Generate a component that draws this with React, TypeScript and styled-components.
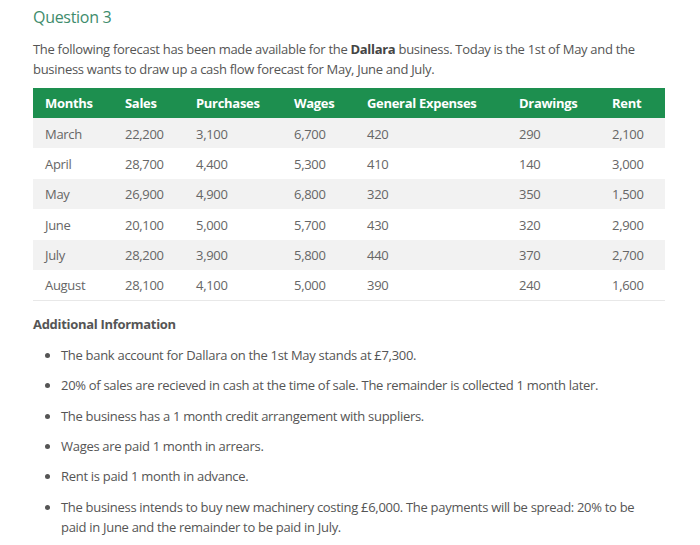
import React from "react";
import styled, { createGlobalStyle } from "styled-components";

const Global = createGlobalStyle`
  html, body { margin: 0; padding: 0; background: #ffffff; }
  body { font-family: "Open Sans", "Liberation Sans", sans-serif; color: #555555; }
`;

const Page = styled.div`
  width: 700px;
  height: 545px;
  box-sizing: border-box;
  padding: 5px 35px 0 33px;
  overflow: hidden;
`;

const Title = styled.h2`
  margin: 0;
  font-weight: 400;
  font-size: 16px;
  line-height: 24px;
  color: #3e8c6c;
  letter-spacing: -0.3px;
`;

const Intro = styled.p`
  margin: 10px 0 0 0;
  font-size: 13px;
  line-height: 20px;
  color: #555555;
  letter-spacing: -0.3px;
  b { font-weight: 700; color: #444; }
`;

const Table = styled.table`
  margin-top: 9px;
  width: 632px;
  border-collapse: collapse;
  table-layout: fixed;
  font-size: 13px;
  letter-spacing: -0.3px;
  border-bottom: 1px solid #e8e8e8;
`;

const HeadCell = styled.th<{ $w: number }>`
  width: ${(p) => p.$w}px;
  background: #1d8f4f;
  color: #ffffff;
  font-weight: 700;
  text-align: left;
  padding: 0 0 0 12px;
  height: 30px;
  box-sizing: border-box;
`;

const Row = styled.tr<{ $shade: boolean }>`
  background: ${(p) => (p.$shade ? "#f2f2f2" : "#ffffff")};
`;

const Cell = styled.td`
  padding: 1px 0 0 12px;
  height: 30.4px;
  box-sizing: border-box;
  color: #666666;
  white-space: nowrap;
`;

const SubHeading = styled.h3`
  margin: 13px 0 0 0;
  font-size: 13px;
  line-height: 20px;
  font-weight: 700;
  color: #555555;
  letter-spacing: -0.3px;
`;

const List = styled.ul`
  margin: 11px 0 0 0;
  padding: 0 20px 0 28px;
  font-size: 13px;
  line-height: 20px;
  color: #555555;
  letter-spacing: -0.3px;
`;

const Item = styled.li`
  margin-bottom: 10.4px;
  padding-left: 0;
`;

const columns: [string, number][] = [
  ["Months", 80],
  ["Sales", 71],
  ["Purchases", 98],
  ["Wages", 73],
  ["General Expenses", 152],
  ["Drawings", 93],
  ["Rent", 65],
];

const rows = [
  ["March", "22,200", "3,100", "6,700", "420", "290", "2,100"],
  ["April", "28,700", "4,400", "5,300", "410", "140", "3,000"],
  ["May", "26,900", "4,900", "6,800", "320", "350", "1,500"],
  ["June", "20,100", "5,000", "5,700", "430", "320", "2,900"],
  ["July", "28,200", "3,900", "5,800", "440", "370", "2,700"],
  ["August", "28,100", "4,100", "5,000", "390", "240", "1,600"],
];

const items = [
  "The bank account for Dallara on the 1st May stands at £7,300.",
  "20% of sales are recieved in cash at the time of sale. The remainder is collected 1 month later.",
  "The business has a 1 month credit arrangement with suppliers.",
  "Wages are paid 1 month in arrears.",
  "Rent is paid 1 month in advance.",
  "The business intends to buy new machinery costing £6,000. The payments will be spread: 20% to be paid in June and the remainder to be paid in July.",
];

export default function App() {
  return (
    <>
      <Global />
      <Page>
        <Title>Question 3</Title>
        <Intro>
          The following forecast has been made available for the <b>Dallara</b> business. Today is the 1st of May and the
          business wants to draw up a cash flow forecast for May, June and July.
        </Intro>
        <Table>
          <thead>
            <tr>
              {columns.map(([name, w]) => (
                <HeadCell key={name} $w={w}>
                  {name}
                </HeadCell>
              ))}
            </tr>
          </thead>
          <tbody>
            {rows.map((r, i) => (
              <Row key={r[0]} $shade={i % 2 === 0}>
                {r.map((v, j) => (
                  <Cell key={j}>{v}</Cell>
                ))}
              </Row>
            ))}
          </tbody>
        </Table>
        <SubHeading>Additional Information</SubHeading>
        <List>
          {items.map((t) => (
            <Item key={t}>{t}</Item>
          ))}
        </List>
      </Page>
    </>
  );
}
